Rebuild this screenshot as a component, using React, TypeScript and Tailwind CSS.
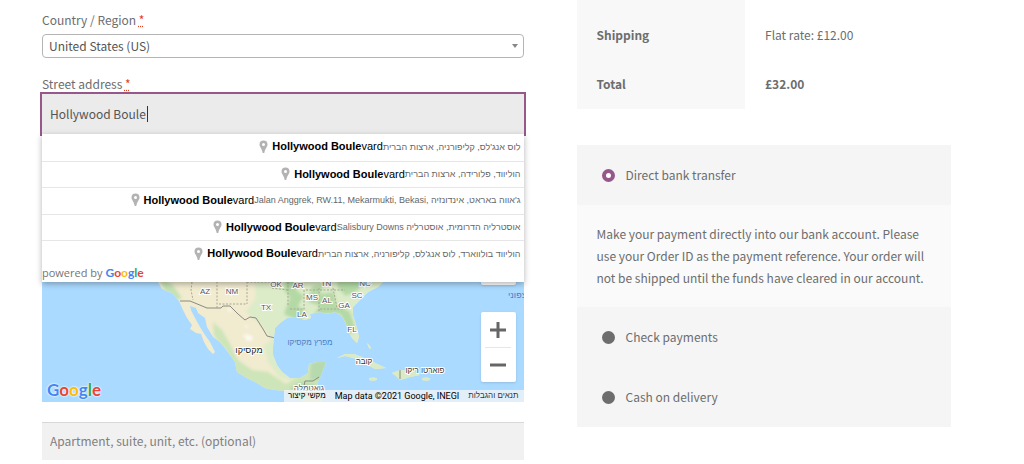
import React from 'react';

const suggestions = [
  "לוס אנג'לס, קליפורניה, ארצות הברית",
  'הוליווד, פלורידה, ארצות הברית',
  "Jalan Anggrek, RW.11, Mekarmukti, Bekasi, ג'אווה באראט, אינדונזיה",
  'Salisbury Downs אוסטרליה הדרומית, אוסטרליה',
  "הוליווד בולווארד, לוס אנג'לס, קליפורניה, ארצות הברית",
];

const stateLabels = [
  { name: 'AZ', x: 205, y: 294 },
  { name: 'NM', x: 232, y: 294 },
  { name: 'OK', x: 276, y: 287 },
  { name: 'AR', x: 298, y: 288 },
  { name: 'TN', x: 326, y: 286 },
  { name: 'NC', x: 365, y: 286 },
  { name: 'MS', x: 312, y: 300 },
  { name: 'AL', x: 327, y: 303 },
  { name: 'GA', x: 344, y: 308 },
  { name: 'SC', x: 357, y: 298 },
  { name: 'TX', x: 266, y: 310 },
  { name: 'LA', x: 302, y: 317 },
  { name: 'FL', x: 352, y: 332 },
];

function Required() {
  return (
    <abbr title="required" className="text-[#e2401c] underline decoration-dotted underline-offset-1">
      *
    </abbr>
  );
}

function GoogleWordmark({ className }: { className: string }) {
  return (
    <span className={className}>
      <span className="text-[#4285f4]">G</span>
      <span className="text-[#ea4335]">o</span>
      <span className="text-[#fbbc05]">o</span>
      <span className="text-[#4285f4]">g</span>
      <span className="text-[#34a853]">l</span>
      <span className="text-[#ea4335]">e</span>
    </span>
  );
}

function MarkerIcon() {
  return (
    <svg viewBox="0 0 9 14" className="h-[14px] w-[9px] shrink-0" aria-hidden="true">
      <path
        fill="#b3b3b3"
        fillRule="evenodd"
        d="M4.5 0.5a4 4 0 0 1 4 4c0 2.600-2.500 3.800-3.200 8.500h-1.600C3 8.300.5 7.100.5 4.500a4 4 0 0 1 4-4zm0 2.500a1.500 1.500 0 1 0 0 3 1.500 1.500 0 0 0 0-3z"
      />
    </svg>
  );
}

function Suggestions() {
  return (
    <div className="absolute inset-x-0 top-full z-10 bg-white font-['Liberation_Sans',sans-serif] shadow-[0_2px_6px_rgba(0,0,0,0.3)]">
      <ul className="grid h-[133px] grid-rows-5">
        {suggestions.map((place, i) => (
          <li
            key={place}
            className={`flex items-center justify-end whitespace-nowrap pb-px pr-[3px] text-[11px] text-black ${
              i > 0 ? 'border-t border-[#e6e6e6]' : ''
            }`}
          >
            <MarkerIcon />
            <span className="ml-1">
              <b>Hollywood Boule</b>vard
            </span>
            <span className="text-[9px] text-[#666]">{place}</span>
          </li>
        ))}
      </ul>
      <div className="flex h-[15px] items-start gap-[3px] font-['Open_Sans',sans-serif] text-[11px] leading-3 text-[#757575]">
        powered by
        <GoogleWordmark className="font-['Lato',sans-serif] text-xs font-bold leading-3" />
      </div>
    </div>
  );
}

function MapDrawing() {
  return (
    <svg
      viewBox="42 144 482 258"
      preserveAspectRatio="xMinYMax slice"
      className="block h-full w-full font-['Liberation_Sans',sans-serif]"
    >
      <defs>
        <clipPath id="land">
          <path d="M158 270V282L162 289 172 293 179 301 183 310 187 318 192 325 190 329 196 333 201 334 204 342 208 349 213 354 215 352 210 342 205 335 200 327 195 318 191 310 190 306 196 308 198 313 205 318 207 327 213 337 220 342 228 352 235 362 237 372 245 377 255 382 265 388 275 390 287 391 295 397 307 403H322L319 390 317 383 320 378 323 370 326 362 317 362 309 364 308 373 300 378 290 378 282 372 277 365 273 355 273 347 274 337 275 328 280 323 287 318 295 317 305 320 311 318 310 314 320 312 327 314 335 312 342 316 345 322 348 330 352 338 357 343 359 337 357 328 353 315 353 307 360 300 368 292 378 287 383 282V270Z" />
          <path d="M337 358L345 354 354 354 362 357 373 362 386 368 375 369 366 364 357 359 345 356Z" />
          <path d="M392 373L400 370 412 371 420 375 410 377 400 380 396 376Z" />
          <ellipse cx="373" cy="379" rx="4" ry="1.500" />
          <ellipse cx="426" cy="379" rx="4" ry="1.500" />
          <path d="M367 343l3 3 1 3-2-1z" />
        </clipPath>
        <filter id="soften">
          <feGaussianBlur stdDeviation="1.500" />
        </filter>
      </defs>
      <rect x="42" y="144" width="482" height="258" fill="#aadaff" />
      <g clipPath="url(#land)">
        <rect x="150" y="260" width="290" height="145" fill="#f1ebd0" />
        <g filter="url(#soften)">
          <path
            fill="#dcebc8"
            d="M254 270L256 298 246 312 262 326 272 340 264 345 268 362 280 378 310 384 312 358 440 358V265Z"
          />
          <path
            fill="#cde5b8"
            d="M213 322L222 330 230 344 238 360 252 370 268 372 286 384 300 376 305 360 330 358V404H290L262 392 232 374 226 350 214 336Z"
          />
          <path
            fill="#b4d9a5"
            d="M286 278L300 276 296 290 304 296 298 306 306 312 300 322 284 314 290 298 284 290ZM312 286L324 284 320 294 334 292 336 304 350 312 356 330 350 334 340 314 314 314 320 306 308 302ZM336 276L366 278 358 290 346 296 338 288Z"
          />
          <path fill="#b7d9ae" d="M311 362L328 360 324 380 310 380Z" />
          <path fill="#b7d9ae" d="M290 388L300 382 316 384 318 400 298 398Z" />
          <path fill="#c5e2b3" d="M160 278L172 284 182 298 176 300 164 290Z" />
          <path fill="#fdfbf2" d="M243 334L252 336 253 340 247 341ZM228 308l3 1v3l-3-1zM245 325l3 1v2l-3-1z" />
          <path fill="#d9ebc5" d="M337 352H440V382H337Z" />
        </g>
        <path
          fill="none"
          stroke="#8a8a80"
          strokeWidth="1"
          d="M180 301L190 301 207 308 221 308 223 306 230 306 238 314 245 320 250 317 256 318 263 329 267 336 275 338M304 386l1-5 8 0 6-4M304 386l8 4M400 370v9"
        />
        <path
          fill="none"
          stroke="#a9a795"
          strokeWidth="1"
          strokeDasharray="2 1.500"
          d="M192 282L191 290 193 300M217 278V308M247 278V304M219 304H247M247 282H270M271 282V288L288 290M288 282V305M304 290V312M319 288V312M333 288L337 308M306 290H345M290 309H304M320 309H345"
        />
      </g>
      <g fontSize="8" fill="#555" stroke="#fff" strokeWidth="2" paintOrder="stroke" textAnchor="middle">
        {stateLabels.map((label) => (
          <text key={label.name} x={label.x} y={label.y}>
            {label.name}
          </text>
        ))}
        <text x="249" y="353" fontSize="9" fill="#222">
          מקסיקו
        </text>
        <text x="309" y="391">
          גואטמלה
        </text>
        <text x="364" y="364" fill="#333">
          קובה
        </text>
        <text x="425" y="373" fill="#333">
          פוארטו ריקו
        </text>
      </g>
      <g fontSize="8" fill="#4a7fc4">
        <text x="310" y="345" textAnchor="middle">
          מפרץ מקסיקו
        </text>
        <text x="508" y="298" fontSize="9">
          צפוני
        </text>
      </g>
    </svg>
  );
}

function MapPanel() {
  return (
    <div className="relative mt-[10px] h-[258px] overflow-hidden">
      <MapDrawing />
      <GoogleWordmark className="absolute bottom-0 left-[5px] font-['Lato',sans-serif] text-[17px] font-bold leading-6 [text-shadow:0_0_2px_#fff,0_0_2px_#fff]" />
      <div className="absolute bottom-[117px] right-2 h-[35px] w-[35px] rounded-xs bg-white shadow" />
      <div className="absolute bottom-5 right-2 flex w-[35px] flex-col items-center rounded-xs bg-white shadow">
        <button type="button" aria-label="Zoom in" className="flex h-[35px] w-full items-center justify-center">
          <svg viewBox="0 0 16 16" className="h-4 w-4" fill="#666">
            <path d="M6.500 0h3v6.500h6.500v3h-6.500v6.500h-3v-6.500h-6.500v-3h6.500z" />
          </svg>
        </button>
        <span className="h-px w-[26px] bg-[#e6e6e6]" />
        <button type="button" aria-label="Zoom out" className="flex h-[34px] w-full items-center justify-center">
          <svg viewBox="0 0 16 16" className="h-4 w-4" fill="#666">
            <path d="M0 6.500h16v3h-16z" />
          </svg>
        </button>
      </div>
      <div className="absolute bottom-0 right-0 flex h-3 items-center gap-[9px] whitespace-nowrap bg-[#f5f5f5]/75 pl-1 pr-[5px] font-['Roboto','Liberation_Sans',sans-serif] text-[9px] leading-3 text-black">
        <button type="button" className="font-['Liberation_Sans',sans-serif] text-[8px]">
          מקשי קיצור
        </button>
        <span>Map data ©2021 Google, INEGI</span>
        <a href="#terms" className="font-['Liberation_Sans',sans-serif] text-[8px] text-[#333]">
          תנאים והגבלות
        </a>
      </div>
    </div>
  );
}

function BillingForm() {
  return (
    <form className="pt-[10px]">
      <label htmlFor="country" className="block h-6 leading-5">
        Country / Region <Required />
      </label>
      <div className="relative">
        <select
          id="country"
          className="block h-6 w-full appearance-none rounded border border-[#b5b5b5] bg-white px-[6px] leading-[22px] text-[#555]"
        >
          <option>United States (US)</option>
        </select>
        <svg viewBox="0 0 6 4" className="pointer-events-none absolute right-[6px] top-[10px] h-1 w-[6px]" fill="#888">
          <path d="M0 0h6l-3 4z" />
        </svg>
      </div>

      <label htmlFor="address" className="mt-4 block h-5 leading-5">
        Street address <Required />
      </label>
      <div className="relative">
        <input
          id="address"
          defaultValue="Hollywood Boule"
          autoComplete="off"
          className="block h-10 w-full bg-[#ebebeb] px-2 pb-[2px] text-[#555] caret-transparent outline-2 outline-[#96588a]"
        />
        <span className="absolute left-[105px] top-3 h-4 w-px bg-[#333]" />
        <Suggestions />
      </div>

      <MapPanel />

      <input
        aria-label="Apartment, suite, unit, etc."
        placeholder="Apartment, suite, unit, etc. (optional)"
        className="mt-5 block h-[38px] w-full border-t border-[#d8d8d8] bg-[#f1f1f1] px-2 pb-[2px] placeholder:text-[#808080]"
      />
    </form>
  );
}

function PaymentOption({ id, label, checked }: { id: string; label: string; checked?: boolean }) {
  return (
    <div className="flex h-[60px] items-center gap-[11px] bg-[#f5f5f5] pl-[25px]">
      <input
        type="radio"
        id={id}
        name="payment"
        defaultChecked={checked}
        className="h-[13px] w-[13px] appearance-none rounded-full bg-[#6d6d6d] checked:border-4 checked:border-[#96588a] checked:bg-white"
      />
      <label htmlFor={id}>{label}</label>
    </div>
  );
}

function OrderReview() {
  return (
    <div>
      <table className="w-full text-left">
        <tbody>
          <tr className="h-[60px]">
            <th className="w-[45%] bg-[#f8f8f8] pl-5 pt-[10px] font-bold">Shipping</th>
            <td className="pl-5 pt-[10px]">Flat rate: £12.00</td>
          </tr>
          <tr className="h-[49px]">
            <th className="bg-[#f8f8f8] pb-[2px] pl-5 font-bold">Total</th>
            <td className="pb-[2px] pl-5 font-bold">£32.00</td>
          </tr>
        </tbody>
      </table>

      <div className="mt-9">
        <PaymentOption id="bacs" label="Direct bank transfer" checked />
        <p className="bg-[#fafafa] px-5 py-[18px] leading-[22px]">
          Make your payment directly into our bank account. Please use your Order ID as the payment reference. Your
          order will not be shipped until the funds have cleared in our account.
        </p>
        <PaymentOption id="cheque" label="Check payments" />
        <PaymentOption id="cod" label="Cash on delivery" />
      </div>
    </div>
  );
}

export default function App() {
  return (
    <main className="grid grid-cols-[9fr_7fr] gap-[53px] bg-white pl-[42px] pr-[73px] font-['Noto_Sans_CJK_JP',sans-serif] text-xs text-[#6d6d6d]">
      <BillingForm />
      <OrderReview />
    </main>
  );
}
